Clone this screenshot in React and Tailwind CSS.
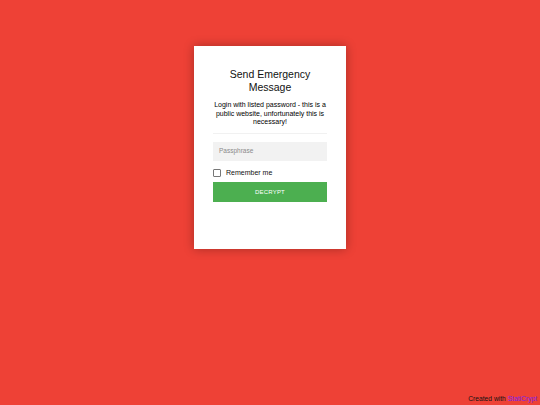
export default function App() {
  return (
    <div className="relative w-[540px] h-[405px] bg-[#ee4136] overflow-hidden" style={{ fontFamily: '"Liberation Sans", Arial, sans-serif' }}>
      <div className="flex justify-center pt-[46px]">
        <div className="w-[152px] bg-white shadow-[0_0_10px_rgba(0,0,0,0.3)] px-[19px] pt-[22px] pb-[47px] flex flex-col items-center">
          <p className="text-[10.5px] leading-[12.5px] text-[#111] text-center">Send Emergency Message</p>
          <p className="mt-[8px] text-[7px] leading-[8.5px] text-black text-center">Login with listed password - this is a public website, unfortunately this is necessary!</p>
          <div className="mt-[6px] w-full h-px bg-[#f1f1f1]" />
          <div className="mt-[8px] w-full h-[19px] bg-[#f2f2f2] flex items-center px-[6px]">
            <span className="text-[6.5px] text-[#8a8a8a]">Passphrase</span>
          </div>
          <div className="mt-[7px] w-full flex items-center gap-[5px]">
            <div className="w-[8px] h-[8px] border border-[#777] rounded-[1px] bg-white" />
            <span className="text-[7px] text-[#111]">Remember me</span>
          </div>
          <div className="mt-[4px] w-full h-[20px] bg-[#4caf50] flex items-center justify-center">
            <span className="text-[6px] text-white tracking-[0.2px]">DECRYPT</span>
          </div>
        </div>
      </div>
      <div className="absolute right-[3px] bottom-[1px] text-[6.7px] text-[#111]">
        Created with <span className="text-[#7a22e6]">StatiCrypt</span>
      </div>
    </div>
  );
}
